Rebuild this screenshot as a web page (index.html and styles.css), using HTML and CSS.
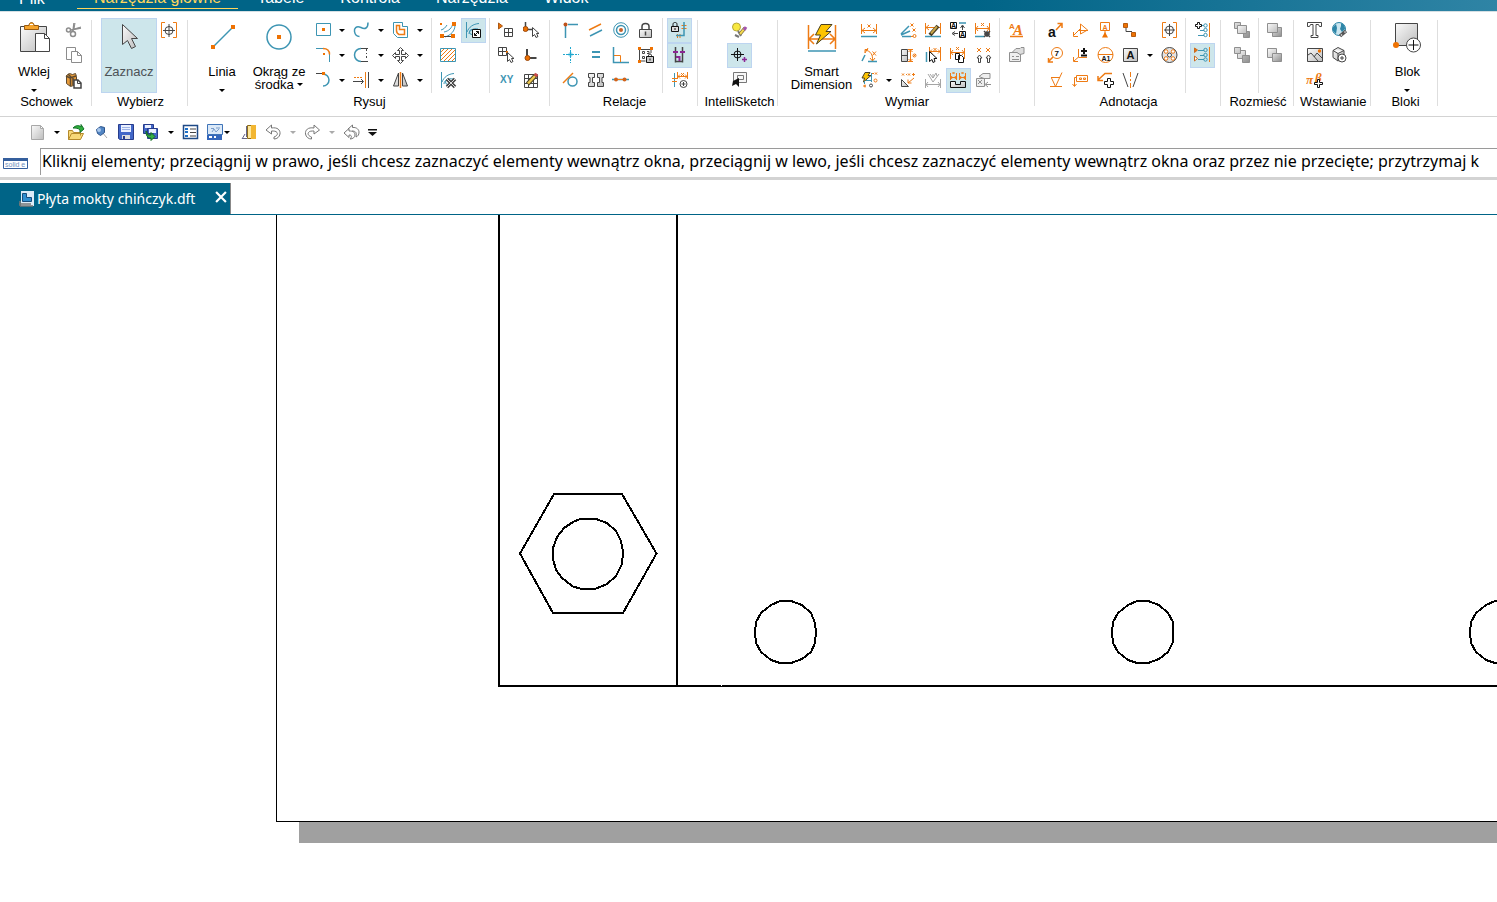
FILE: index.html
```html
<!DOCTYPE html>
<html lang="pl">
<head>
<meta charset="utf-8">
<title>Płyta mokty chińczyk.dft</title>
<link rel="stylesheet" href="styles.css">
</head>
<body>
<svg class="defs" width="0" height="0" aria-hidden="true">
  <defs>
    <linearGradient id="gg" x1="0" y1="0" x2="1" y2="1"><stop offset="0" stop-color="#fafafa"/><stop offset="1" stop-color="#bdbdbd"/></linearGradient>
    <linearGradient id="gd" x1="0" y1="0" x2="1" y2="1"><stop offset="0" stop-color="#e2e2e2"/><stop offset="1" stop-color="#8e8e8e"/></linearGradient>
    <symbol id="down" viewBox="0 0 6 3"><path d="M0 0h6l-3 3z" fill="currentColor"/></symbol>
  </defs>
</svg>

<nav class="menu">
  <a class="menu-file" href="#">Plik</a>
  <a class="menu-tab active" href="#">Narzędzia główne</a>
  <a class="menu-tab" href="#">Tabele</a>
  <a class="menu-tab" href="#">Kontrola</a>
  <a class="menu-tab" href="#">Narzędzia</a>
  <a class="menu-tab" href="#">Widok</a>
</nav>

<div class="ribbon">
  <section class="group">
    <div class="tools roomy">
      <button class="big gap-after">
        <svg class="i32" viewBox="0 0 32 32"><path class="k" fill="url(#gg)" d="M2.500 5.500h26v25h-26z"/><path fill="#f5a32b" stroke="#9a5b10" d="M6.500 8.500v-4h4.500c0-4 5-4 5 0h4.500v4z"/><path d="M12 3.500h3" stroke="#fff"/><path class="k" fill="#fff" d="M17.500 12.500h9l5 5v13h-14z"/><path class="k" d="M26.500 12.500v5h5"/></svg>
        <span>Wklej</span><svg class="down"><use href="#down"/></svg>
      </button>
      <div class="col">
        <button class="tool" aria-label="Wytnij"><svg class="i" viewBox="0 0 17 17"><g stroke="#8c8c8c"><path stroke-width="1.500" d="M9 1L8 9M16 6L6 8"/><circle cx="3.500" cy="8" r="2" stroke-width="1.500"/><circle cx="8" cy="12" r="2.500" stroke-width="1.500"/><path d="M10 1L9 7l7-2"/></g></svg></button>
        <button class="tool" aria-label="Kopiuj"><svg class="i" viewBox="0 0 17 17"><path fill="#fff" stroke="#8c8c8c" d="M1.500.5h9v12h-9z"/><path fill="#fff" stroke="#8c8c8c" d="M6.500 4.500h6l4 4v7h-10zM12.500 4.500v4h4"/></svg></button>
        <button class="tool" aria-label="Wklej specjalnie"><svg class="i" viewBox="0 0 17 17"><path fill="#e79b3a" stroke="#5e4a30" d="M1.500 3.500l3-2 3 1 3-1 1 3v8l-6 2-4-3z"/><path stroke="#5e4a30" stroke-width="1.500" d="M1 4l4 2 6-2M5.500 6v8M3 2l3 3M8 6v7"/><path class="k" fill="#fff" stroke-width="1.500" d="M9 8h4l3 3v5H9z"/><path class="k" d="M12.500 8v3.500H16"/></svg></button>
      </div>
    </div>
    <h2>Schowek</h2>
  </section>
  <section class="group">
    <div class="tools roomy">
      <button class="big select on">
        <svg class="i32" viewBox="0 0 32 32"><path class="k" fill="url(#gg)" d="M9.500 3.500v20l5-4 4 8 4-2-4-8h6z"/></svg>
        <span>Zaznacz</span>
      </button>
      <div class="col">
        <button class="tool" aria-label="Znacznik środka"><svg class="i" viewBox="0 0 17 17"><path class="o" d="M4 .5H.5v15H4M12 .5h3.500v15H12"/><circle class="k" cx="8" cy="8.500" r="4"/><path class="k" d="M8 2v13M2 8.500h12"/></svg></button>
      </div>
    </div>
    <h2>Wybierz</h2>
  </section>
  <section class="group">
    <div class="tools">
      <button class="big line">
        <svg class="i32" viewBox="0 0 32 32"><path class="b" stroke-width="1.500" d="M7 26L27 6"/><path class="of" d="M5 24h4v4H5zM25 4h4v4h-4z"/></svg>
        <span>Linia</span><svg class="down"><use href="#down"/></svg>
      </button>
      <button class="big circle">
        <svg class="i32" viewBox="0 0 32 32"><circle class="b" cx="16" cy="16" r="12" stroke-width="1.500"/><path class="of" d="M14 14h4v4h-4z"/></svg>
        <span>Okrąg ze<br>środka <svg class="down inline"><use href="#down"/></svg></span>
      </button>
      <div class="col">
        <button class="tool wide" aria-label="Prostokąt"><svg class="i" viewBox="0 0 17 17"><path class="b" d="M2.500 1.500h14v12h-14z"/><path class="of" d="M8 6h3v3H8z"/></svg><svg class="down"><use href="#down"/></svg></button>
        <button class="tool wide" aria-label="Zaokrąglenie"><svg class="i" viewBox="0 0 17 17"><path class="b" d="M2 1.500h7M15.500 7v8"/><path class="o" stroke-width="1.500" d="M9 1.500c4 0 6.500 2 6.500 6"/><path class="of" d="M9 6h2v2H9z"/></svg><svg class="down"><use href="#down"/></svg></button>
        <button class="tool wide" aria-label="Łuk"><svg class="i" viewBox="0 0 17 17"><path class="k" d="M2 1.500h6"/><path class="b" stroke-width="1.500" d="M9 2a6 6 0 0 1 0 12"/><path class="of" d="M8 0h3v3H8z"/></svg><svg class="down"><use href="#down"/></svg></button>
      </div>
      <div class="col">
        <button class="tool wide" aria-label="Krzywa"><svg class="i" viewBox="0 0 17 17"><path class="b" stroke-width="1.500" d="M15 .5c0 6-3 7-7 5-5-2-7 1-6.500 4 .5 3 2 5 5 5"/></svg><svg class="down"><use href="#down"/></svg></button>
        <button class="tool wide" aria-label="Przytnij"><svg class="i" viewBox="0 0 17 17"><path class="b" stroke-width="1.500" d="M8 1.500a6.500 6.500 0 0 0 0 13"/><path class="k" d="M8 1.500h7M8 14.500h7M13.500 2v2M13.500 6v1M13.500 9v2"/></svg><svg class="down"><use href="#down"/></svg></button>
        <button class="tool wide" aria-label="Wydłuż"><svg class="i" viewBox="0 0 17 17"><path class="o" stroke-dasharray="2 1" d="M1 5.500h9"/><path class="o" d="M12.500 0v16"/><path class="k" d="M0 9.500h10M8 7l2.500 2.500L8 12M15.500 0v16"/></svg><svg class="down"><use href="#down"/></svg></button>
      </div>
      <div class="col">
        <button class="tool wide" aria-label="Odsunięcie"><svg class="i" viewBox="0 0 17 17"><path class="b" d="M1.500.5h9v4h5v11h-10l-4-4z"/><path class="o" stroke-width="1.500" d="M4.500 3.500h3v4h5v5H7c-2-1-2.500-2-2.500-4z"/></svg><svg class="down"><use href="#down"/></svg></button>
        <button class="tool wide" aria-label="Przesuń"><svg class="i" viewBox="0 0 17 17"><path class="k" fill="#fff" d="M8.500.5l3 3h-2v4h4v-2l3 3-3 3v-2h-4v4h2l-3 3-3-3h2v-4h-4v2l-3-3 3-3v2h4v-4h-2z"/></svg><svg class="down"><use href="#down"/></svg></button>
        <button class="tool wide" aria-label="Odbicie lustrzane"><svg class="i" viewBox="0 0 17 17"><path class="k" fill="url(#gg)" d="M6.500 1v13h-5zM10.500 1v13h5z"/><path class="o" stroke-width="1.500" d="M8.500 0v16"/></svg><svg class="down"><use href="#down"/></svg></button>
      </div>
      <div class="sep"></div>
      <div class="col">
        <button class="tool" aria-label="Wypełnienie konturu"><svg class="i" viewBox="0 0 17 17"><path class="b" d="M4 10c5-1 8-4 9-9M5 15c6-2 10-6 10-12M1 8c3-1 4-2 6-5"/><path class="of" d="M12 0h4v4h-4zM0 12h4v4H0zM11 12h4v4h-4zM0 1h2v2H0z"/><path class="k" d="M4 14.500h7"/></svg></button>
        <button class="tool" aria-label="Wypełnienie"><svg class="i" viewBox="0 0 17 17"><path class="o" d="M1 5l4-4M1 9l8-8M1 13l12-12M4 14L16 2M8 14l8-8M12 14l4-4"/><path class="b" d="M.5 1.500h15v13H.5z"/></svg></button>
        <button class="tool" aria-label="Usuń konstrukcję"><svg class="i" viewBox="0 0 17 17"><path class="b" d="M1.500 0v16M2 10C4 5 8 2 14 1.500M4 12c0-4 5-6 9-5"/><circle class="b" cx="8" cy="10" r="2.500"/><path class="k" stroke-width="3.500" d="M7 7l8 8M15 7l-8 8"/><path stroke="#ddd" stroke-width="1" d="M7 7l8 8M15 7l-8 8"/></svg></button>
      </div>
      <div class="col">
        <button class="tool on" aria-label="Konstrukcja"><svg class="i" viewBox="0 0 17 17"><path class="b" d="M1.500 0v16M2 10C4 5 8 2 14 1.500M4 12c0-4 5-6 9-5"/><circle class="b" cx="7" cy="10" r="2.500"/><path class="kb" fill="#fff" d="M7.500 7.500h8v8h-8z"/><path class="kb" d="M9.500 13.500l4-4M11 9.500h2.500V12M9.500 11v2.500H12"/></svg></button>
      </div>
      <div class="sep tight"></div>
      <div class="col">
        <button class="tool" aria-label="Siatka"><svg class="i" viewBox="0 0 17 17"><path fill="#ee7203" stroke="#a85a18" d="M.5 1l4 3-4 3z"/><path class="k" d="M6.500 6.500h8v8h-8zM10.500 6v9M6 10.500h9"/></svg></button>
        <button class="tool" aria-label="Przyciągaj do siatki"><svg class="i" viewBox="0 0 17 17"><path class="k" d="M.5.5h8v8h-8zM4.500 0v9M0 4.500h9"/><path class="of" d="M8 4h2v2H8z"/><path class="k" fill="#fff" d="M9.500 5.500v9l2-2 1.500 3 2-1-1.500-3H16z"/></svg></button>
        <button class="tool" aria-label="XY"><svg class="i" viewBox="0 0 17 17"><text class="tb" x="2" y="11" font-size="10">XY</text></svg></button>
      </div>
      <div class="col">
        <button class="tool" aria-label="Przesuń początek"><svg class="i" viewBox="0 0 17 17"><path class="k" stroke-width="1.500" d="M2.500 0v7M3 7.500h7"/><circle cx="2.500" cy="7" r="2.500" fill="#ee7203" stroke="#9a4a10"/><path class="k" fill="#fff" d="M9.500 5.500v9l2-2 1.500 3 2-1-1.500-3H16z"/></svg></button>
        <button class="tool" aria-label="Zeruj początek"><svg class="i" viewBox="0 0 17 17"><path class="k" stroke-width="2" d="M4 2v9h9.500"/><circle cx="4.500" cy="11" r="2.500" fill="#ee7203" stroke="#9a4a10"/></svg></button>
        <button class="tool" aria-label="Opcje siatki"><svg class="i" viewBox="0 0 17 17"><path class="k" d="M1.500 2.500h13v13h-13zM5.500 2v14M10.500 2v14M1 6.500h14M1 11.500h14"/><path stroke="#4d4528" stroke-width="4.500" d="M4.500 12L13 3"/><path stroke="#eec84e" stroke-width="2.500" d="M5 11.500L12 4"/><path stroke="#c94a4a" stroke-width="3.500" d="M12 4l2-2"/></svg></button>
      </div>
    </div>
    <h2>Rysuj</h2>
  </section>
  <section class="group">
    <div class="tools">
      <div class="col">
        <button class="tool" aria-label="Połącz"><svg class="i" viewBox="0 0 17 17"><path class="b" stroke-width="1.500" d="M3.500 4v12M6 2.500h10"/><circle cx="3.500" cy="2.500" r="2" fill="#c0521a"/></svg></button>
        <button class="tool" aria-label="Poziomo/pionowo"><svg class="i" viewBox="0 0 17 17"><path stroke="#21a8cf" stroke-dasharray="2 1" d="M1 7.500h16M8.500 0v16"/><path stroke="#21a8cf" stroke-width="1.500" d="M6 7.500h5M8.500 5v5"/></svg></button>
        <button class="tool" aria-label="Styczny"><svg class="i" viewBox="0 0 17 17"><circle class="b" cx="10.500" cy="9.500" r="4.500" stroke-width="1.500"/><path class="o" stroke-width="1.500" d="M1 11L11 1"/></svg></button>
      </div>
      <div class="col">
        <button class="tool" aria-label="Równoległy"><svg class="i" viewBox="0 0 17 17"><path class="o" stroke-width="1.500" d="M2 8l12-6"/><path class="b" stroke-width="1.500" d="M3 14l12-6"/></svg></button>
        <button class="tool" aria-label="Równy"><svg class="i" viewBox="0 0 17 17"><path class="b" stroke-width="2" d="M5 5h8M5 10h8"/></svg></button>
        <button class="tool" aria-label="Symetryczny"><svg class="i" viewBox="0 0 17 17"><path class="k" fill="url(#gg)" d="M1.500 1.500h6v4h-2v5h2v4h-6v-4h1.500v-5H1.500zM16.500 1.500h-6v4h2v5h-2v4h6v-4H15v-5h1.500z"/></svg></button>
      </div>
      <div class="col">
        <button class="tool" aria-label="Koncentryczny"><svg class="i" viewBox="0 0 17 17"><circle class="b" cx="9" cy="8" r="7.300"/><circle class="b" cx="9" cy="8" r="4.500" stroke-width="1.500"/><circle cx="9" cy="8" r="2" fill="#c8612a"/></svg></button>
        <button class="tool" aria-label="Prostopadły"><svg class="i" viewBox="0 0 17 17"><path class="b" stroke-width="1.500" d="M1.500 0v15.500H17"/><path class="o" d="M2 8.500h6.500V15"/></svg></button>
        <button class="tool" aria-label="Współliniowy"><svg class="i" viewBox="0 0 17 17"><path class="b" stroke-width="1.500" d="M0 7.500h17"/><path class="o" d="M4 7.500h9"/><circle cx="4" cy="7.500" r="2" fill="#d3621a"/><circle cx="12.500" cy="7.500" r="2" fill="#d3621a"/></svg></button>
      </div>
      <div class="col">
        <button class="tool" aria-label="Zablokuj"><svg class="i" viewBox="0 0 17 17"><path class="k" stroke-width="1.500" d="M5 8V4.500c0-4 7-4 7 0V8"/><path class="k" fill="url(#gg)" d="M2.500 7.500h12v8h-12z"/><path class="k" stroke-width="1.500" d="M8.500 9.500v4"/></svg></button>
        <button class="tool" aria-label="Zestaw sztywny"><svg class="i" viewBox="0 0 17 17"><path class="k" d="M2.500 2v12h6M3 2.500h11V6M5.500 4.500h2v2h-2zM10 4.500h2v2h-2M5.500 9.500h2v2h-2z"/><path class="of" d="M1 0h3v3H1zM13 0h3v3h-3zM1 13h3v3H1z"/><path class="kb" d="M11.500 10V8.500c0-2 3-2 3 0V10"/><path class="kb" fill="#ccc" d="M9.500 9.500h7v6h-7zM13 11.500v2"/></svg></button>
      </div>
      <div class="sep"></div>
      <div class="col">
        <button class="tool on" aria-label="Utrzymaj relacje"><svg class="i" viewBox="0 0 17 17"><path class="kb" d="M2 5V2.500c0-3 4-3 4 0V5"/><path class="kb" fill="#ddd" d="M.5 4.500h7v5h-7zM4 6v2"/><path class="o" d="M10.500 3.500h5M10.500 6.500h5M6.500 12v4M9 12v4"/><path class="b" stroke-width="1.500" d="M13 0v13.500H5"/></svg></button>
        <button class="tool on" aria-label="Uchwyty relacji"><svg class="i" viewBox="0 0 17 17"><path class="k" stroke-width="1.500" d="M4.500 0v15.500M11.500 0v15.500M4.500 14.500h7"/><path stroke="#8b2794" stroke-width="2" d="M2 5h5M9 5h5M5 10h3.500V14"/></svg></button>
        <button class="tool" aria-label="Asystent relacji"><svg class="i" viewBox="0 0 17 17"><path class="b" d="M3.500 1v14"/><path class="o" d="M1 6.500h5M1 9.500h5M6.500 0v7M16.500 0v7M7 4.500h9M9 2.500l-2 2 2 2M14 2.500l2 2-2 2M10 1l3 3m0-3l-3 3"/><circle class="k" cx="12.500" cy="12" r="3.500" fill="#fff"/><path class="k" d="M12.500 10v4M10.500 12h4"/></svg></button>
      </div>
    </div>
    <h2>Relacje</h2>
  </section>
  <section class="group">
    <div class="tools intelli">
      <div class="col">
        <button class="tool" aria-label="Opcje IntelliSketch"><svg class="i" viewBox="0 0 17 17"><circle cx="5.500" cy="5" r="4" fill="#f8e840" stroke="#b6a73a"/><path stroke="#777" stroke-width="2" d="M7 9l3 5M4 13l4 2"/><path stroke="#6b5b30" stroke-width="3.500" d="M9 12l5-6"/><path stroke="#f3d950" stroke-width="2" d="M9 12l5-6"/><path stroke="#a355b0" stroke-width="3" d="M13 8l2-3"/></svg></button>
        <button class="tool on" aria-label="Punkt przyciągania"><svg class="i" viewBox="0 0 17 17"><circle class="kb" cx="6.500" cy="7.500" r="3.500"/><path class="kb" d="M6.500 1v13M0 7.500h13"/><path stroke="#8b2794" stroke-width="1.500" d="M13.500 10v5M11 12.500h5"/></svg></button>
        <button class="tool" aria-label="Strefa"><svg class="i" viewBox="0 0 17 17"><path stroke="#777" fill="#f7f7f7" d="M2.500.5h13v10h-13z"/><path stroke="#777" d="M6.500 3.500h6v4h-6z"/><path d="M8 6v9l-3-3-4 2 1-5z" fill="#111"/></svg></button>
      </div>
    </div>
    <h2 class="snug">IntelliSketch</h2>
  </section>
  <section class="group">
    <div class="tools">
      <button class="big smart">
        <svg class="i32" viewBox="0 0 32 32"><path class="o" stroke-width="1.500" d="M2.500 4v24M29.500 4v24M3 18h26M8 13l-5 5 5 5M24 13l5 5-5 5"/><path class="b" stroke-width="1.500" d="M2 30h28"/><path fill="#fdc400" stroke="#4b4020" d="M15 3.500h11l-6 7h5L10.500 23l4-9h-5z"/></svg>
        <span>Smart<br>Dimension</span>
      </button>
      <div class="col">
        <button class="tool" aria-label="Odległość między"><svg class="i" viewBox="0 0 17 17"><path class="o" d="M.5 2v10M15.500 2v10M1 8.500h14M4 6L1 8.500 4 11M12 6l3 2.500-3 2.500M6.500 2.500l3 3m0-3l-3 3"/><path class="b" stroke-width="1.500" d="M0 14.500h16"/></svg></button>
        <button class="tool" aria-label="Kąt między"><svg class="i" viewBox="0 0 17 17"><path class="o" d="M4 6l3-5M4 3c6 1 8 5 7.500 11M4 6V2.500h3M9 11l2.500 3L14 11M11.500 4.500l3.500 4m0-4l-3.500 4"/><path class="b" stroke-width="1.500" d="M1 14l3-6M7 14.500h9"/></svg></button>
        <button class="tool wide" aria-label="Wymiar z bazy"><svg class="i" viewBox="0 0 17 17"><path fill="#fdc400" stroke="#4b4020" d="M4 .5h5L7 3.500h3L2.500 10l1-4H1z"/><path class="o" d="M11 1.500h2M14 .5l2 2m0-2l-2 2M4 12.500v3M2.500 13l2 2m0-2l-2 2"/><path class="b" d="M10.500 1v9M5 8.500h6M3.500 9v3"/><circle class="o" cx="14.500" cy="8.500" r="1.500"/><circle class="k" cx="10" cy="13.500" r="1.500"/></svg><svg class="down"><use href="#down"/></svg></button>
      </div>
      <div class="col">
        <button class="tool" aria-label="Wymiar kątowy współrzędnych"><svg class="i" viewBox="0 0 17 17"><path class="b" stroke-width="1.500" d="M1 12l8-8M1 13l9-4M2 14.500h9"/><path class="o" d="M10.500 1.500l3 3m0-3l-3 3M12.500 6.500l3 3m0-3l-3 3M11 14.500h2"/><circle class="o" cx="14.500" cy="14" r="1.500"/></svg></button>
        <button class="tool" aria-label="Średnica symetryczna"><svg class="i" viewBox="0 0 17 17"><path class="k" fill="url(#gg)" d="M1.500 2.500h6v12h-6zM1 8.500h7"/><path class="o" d="M8 2.500h5M8 14.500h5M10.500 3v11M8.500 5l2-2 2 2M8.500 12l2 2 2-2"/><circle class="o" cx="14.500" cy="8.500" r="1.500"/><path class="o" d="M13 10l3-3"/></svg></button>
        <button class="tool" aria-label="Wymiar fazowania"><svg class="i" viewBox="0 0 17 17"><path class="o" d="M2 1.500l2 2m0-2l-2 2M6 2.500h1M8 1.500l2 2m0-2l-2 2M12 2.500h3M13.500 1v3M14 6l-6 5M8 7.500V11h3.500"/><path class="k" fill="url(#gg)" d="M1.500 7.500l7 7h-7z"/></svg></button>
      </div>
      <div class="col">
        <button class="tool" aria-label="Edytuj wymiar"><svg class="i" viewBox="0 0 17 17"><path class="o" d="M.5 1v11M15.500 1v11M1 5.500h14M4 3L1 5.500 4 8"/><path class="b" stroke-width="1.500" d="M0 14.500h16"/><path stroke="#403820" stroke-width="4" d="M5 13l8-9"/><path stroke="#c8a64a" stroke-width="2" d="M6 11.500l6-7"/></svg></button>
        <button class="tool" aria-label="Zaznacz wymiar"><svg class="i" viewBox="0 0 17 17"><path class="b" stroke-width="1.500" d="M1.500 5v10"/><path class="o" d="M4.500 0v8M15.500 0v14M5 4.500h10M7 2.500l-2 2 2 2M13 2.500l2 2-2 2M8.500 1l3 3m0-3l-3 3"/><path class="kb" fill="#fff" d="M4.500 4.500v10l2.500-2 1 3 2-1-1-3h3z"/></svg></button>
        <button class="tool off" aria-label="Pomocniczy wymiar"><svg class="i" viewBox="0 0 17 17"><path stroke="#a5a5a5" d="M.5 7v9M15.500 7v9M1 12.500h14M3 10l-2 2.500L3 15M13 10l2 2.500-2 2.500M3 2l5 8M14 2L8 10M8 2v4M5 2l3 4 3-5 1 3"/></svg></button>
      </div>
      <div class="col">
        <button class="tool" aria-label="Wyrównaj tekst"><svg class="i" viewBox="0 0 17 17"><path class="b" stroke-width="1.500" d="M9 1h7"/><path class="kb" fill="#fff" d="M.5.5h6v6h-6zM9.500 9.500h6v6h-6z"/><text class="tk" x="1" y="6" font-size="7">A</text><text class="tk" x="10" y="15" font-size="7">A</text><path class="k" d="M8 11.500H3.500M5 9.500l-3 2 3 2M12.500 8V4M10.500 6l2-3 2 3"/></svg></button>
        <button class="tool" aria-label="Kopiuj wymiar"><svg class="i" viewBox="0 0 17 17"><path class="o" d="M.5 1v11M14.500 1v11M1 5.500h13M3 3L1 5.500 3 8M12 3l2 2.500L12 8M6 0l3 3m0-3L6 3"/><path class="kb" fill="#fff" d="M5.500 6.500h4v6h-4zM8.500 8.500h3l2 2v5h-5z"/></svg></button>
        <button class="tool on" aria-label="Układ wymiarów"><svg class="i" viewBox="0 0 17 17"><path class="o" d="M.5 1v7M6.500 1v7M1 5.500h5M2 4L1 5.500 2 7M5 4l1 1.500L5 7M9.500 1v7M15.500 1v7M10 5.500h5M11 4l-1 1.500L11 7M14 4l1 1.500L14 7M2.500 0l2 2m0-2l-2 2M11.500 0l2 2m0-2l-2 2"/><path class="kb" fill="url(#gg)" d="M.5 9.500h5v3h5v-3h5v6H.5z"/></svg></button>
      </div>
      <div class="col">
        <button class="tool" aria-label="Usuń wymiar"><svg class="i" viewBox="0 0 17 17"><path class="o" d="M.5 1v11M14.500 1v10M1 6.500h13M3 4L1 6.500 3 9M12 4l2 2.500L12 9M6 1l3 3m0-3L6 4"/><path class="b" stroke-width="1.500" d="M0 14.500h9"/><path class="k" stroke-width="1.500" d="M9 9l6 6M15 9l-6 6M12 9v6M9 12h6"/></svg></button>
        <button class="tool" aria-label="Przesuń wymiary"><svg class="i" viewBox="0 0 17 17"><path class="o" d="M2 1l4 4m0-4L2 5M11 1l4 4m0-4l-4 4"/><path class="k" d="M3.500 15.500V11H2l2.500-3L7 11H5.500v4.500zM12.500 15.500V11H11l2.500-3 2.500 3h-1.500v4.500z"/></svg></button>
        <button class="tool off" aria-label="Pobierz wymiary"><svg class="i" viewBox="0 0 17 17"><path stroke="#8f8f8f" fill="#eee" d="M1.500 6.500h8v8h-8zM4 4.500l4-3h7v5H9z"/><path stroke="#8f8f8f" d="M3 8l4 4m0-4l-4 4M16 12.500h-5M13 10l-3 2.500 3 2.500"/></svg></button>
      </div>
      <div class="sep tight"></div>
      <div class="col">
        <button class="tool" aria-label="Style"><svg class="i" viewBox="0 0 17 17"><text class="to serif" x="5" y="13" font-size="15" font-style="italic">A</text><text class="to" x="1" y="7" font-size="8">A</text><path class="o" stroke-width="1.500" d="M2 14.500h13"/></svg></button>
        <button class="tool off" aria-label="Właściwości"><svg class="i" viewBox="0 0 17 17"><path stroke="#8f8f8f" fill="#eee" d="M1.500 5.500h11v9h-11z"/><path stroke="#8f8f8f" fill="#ddd" d="M4 5.500l4-4h4l1-1h3v6l-4 1-3-2z"/><path stroke="#8f8f8f" d="M4 9.500h2M8 9.500h3M4 12.500h7"/></svg></button>
      </div>
    </div>
    <h2>Wymiar</h2>
  </section>
  <section class="group">
    <div class="tools">
      <div class="col">
        <button class="tool" aria-label="Objaśnienie"><svg class="i" viewBox="0 0 17 17"><text class="tk" x="1" y="15" font-size="14">a</text><path class="o" stroke-width="1.500" d="M9 8l6-6.500M10.500 1.500H15V6"/></svg></button>
        <button class="tool" aria-label="Balon"><svg class="i" viewBox="0 0 17 17"><circle class="o" cx="10" cy="6" r="5.500"/><path class="o" stroke-width="1.500" d="M6 10l-5 5M1.500 11v4H6"/><text class="tk" x="7.500" y="9" font-size="8">7</text></svg></button>
        <button class="tool" aria-label="Chropowatość"><svg class="i" viewBox="0 0 17 17"><path class="o" d="M4 5.500h9M4.500 6l4 8.500L15 .5M3 14.500h12"/></svg></button>
      </div>
      <div class="col">
        <button class="tool" aria-label="Linia odniesienia"><svg class="i" viewBox="0 0 17 17"><path class="o" d="M1 14l8-8M1.500 10v4.500H6M7 8.500h9M8.500 2v10l7-4z"/></svg></button>
        <button class="tool" aria-label="Symbol krawędzi"><svg class="i" viewBox="0 0 17 17"><path class="o" d="M2 14l4-3.500M6.500 2v8.500H15M1.500 10v4.500H6"/><path class="kb" stroke-width="2" d="M9 4h6M12 1v6M9 8.500h6"/></svg></button>
        <button class="tool" aria-label="Ramka tolerancji"><svg class="i" viewBox="0 0 17 17"><path class="o" d="M4.500 3.500h11v6h-11zM4 5.500H2.500V14M.5 12l2 2.500 2-2.500M7.500 6h2v1.500h-2zM11.500 6h2v1.500h-2z"/></svg></button>
      </div>
      <div class="col">
        <button class="tool" aria-label="Baza odniesienia"><svg class="i" viewBox="0 0 17 17"><path class="o" d="M3.500.5h9v8h-9zM8 9v4"/><path class="of" d="M5 15.500h6L8 10z"/><text class="to" x="5.500" y="7.500" font-size="7">A</text></svg></button>
        <button class="tool" aria-label="Punkt bazowy"><svg class="i" viewBox="0 0 17 17"><circle class="o" cx="8.500" cy="8" r="7.500"/><path class="o" d="M1 7.500h15"/><text class="tk" x="4.500" y="14" font-size="7">A1</text></svg></button>
        <button class="tool" aria-label="Dodaj odnośnik"><svg class="i" viewBox="0 0 17 17"><path class="o" stroke-width="1.500" d="M15 1.500H8L1 8M1 4v4.500h5"/><path class="kb" fill="#fff" d="M10.500 6.500h3v3h3v3h-3v3h-3v-3h-3v-3h3z"/></svg></button>
      </div>
      <div class="col">
        <button class="tool" aria-label="Łącznik"><svg class="i" viewBox="0 0 17 17"><path class="k" d="M4 5v4.500h6"/><path fill="#ee7203" stroke="#b55a10" d="M1.500 1.500h4v4h-4zM9.500 10.500h4v4h-4z"/></svg></button>
        <button class="tool wide" aria-label="Tekst"><svg class="i" viewBox="0 0 17 17"><path class="k" fill="url(#gg)" d="M1.500 1.500h14v13h-14z"/><text class="tk" x="4.500" y="12" font-size="11">A</text></svg><svg class="down"><use href="#down"/></svg></button>
        <button class="tool" aria-label="Linia środkowa"><svg class="i" viewBox="0 0 17 17"><path class="k" d="M1 1l5 14M16 1l-5 14"/><path class="o" stroke-dasharray="5 2 2 2" d="M8.500 0v16"/></svg></button>
      </div>
      <div class="col">
        <button class="tool" aria-label="Oznaczenie środka"><svg class="i" viewBox="0 0 17 17"><path class="o" d="M5 .5H1.500v15H5M12 .5h3.500v15H12"/><circle class="k" cx="8.500" cy="8" r="4"/><path class="k" d="M8.500 2v12M3 8h11"/></svg></button>
        <button class="tool" aria-label="Okrąg śrub"><svg class="i" viewBox="0 0 17 17"><circle class="k" cx="8.500" cy="8" r="7.500" fill="#e4e4e4"/><g class="o" fill="#fff"><circle cx="5" cy="4.500" r="1.800"/><circle cx="12" cy="4.500" r="1.800"/><circle cx="5" cy="11.500" r="1.800"/><circle cx="12" cy="11.500" r="1.800"/></g><circle class="k" cx="8.500" cy="8" r="2" fill="#fff"/></svg></button>
      </div>
      <div class="sep tight"></div>
      <div class="col">
        <button class="tool" aria-label="Dodaj do listy"><svg class="i" viewBox="0 0 17 17"><path class="kb" fill="#fff" d="M3.500.5h2v2h2v2h-2v2h-2v-2h-2v-2h2z"/><path class="o" d="M15.500 1v14"/><path class="b" d="M8 3.500h2M6 8.500h4M4 13.500h6"/><g class="b"><circle cx="11.500" cy="3.500" r="1.700"/><circle cx="11.500" cy="8" r="1.700"/><circle cx="11.500" cy="13" r="1.700"/></g></svg></button>
        <button class="tool on" aria-label="Lista balonów"><svg class="i" viewBox="0 0 17 17"><path fill="#ee7203" stroke="#c96a20" d="M.5 1l3 2-3 2.500z"/><path fill="#fff" stroke="#c96a20" d="M.5 9l3 2.500-3 2.500z"/><path class="o" d="M15.500 0v15"/><path class="b" d="M4 3.500h6M6 8.500h4M4 12.500h6"/><g class="b"><circle cx="11.500" cy="3" r="1.700"/><circle cx="11.500" cy="8" r="1.700"/><circle cx="11.500" cy="12.500" r="1.700"/></g></svg></button>
      </div>
    </div>
    <h2>Adnotacja</h2>
  </section>
  <section class="group">
    <div class="tools">
      <div class="col">
        <button class="tool off" aria-label="Przesuń na wierzch"><svg class="i" viewBox="0 0 17 17"><g stroke="#8f8f8f"><path fill="url(#gd)" d="M1.500.5h6v6h-6zM10.500 9.500h6v6h-6z"/><path fill="url(#gg)" d="M4.500 3.500h9v8h-9z"/></g></svg></button>
        <button class="tool off" aria-label="Przesuń na spód"><svg class="i" viewBox="0 0 17 17"><g stroke="#8f8f8f"><path fill="url(#gg)" d="M4.500 3.500h8v8h-8z"/><path fill="url(#gd)" d="M1.500.5h6v6h-6zM9.500 8.500h7v7h-7z"/></g></svg></button>
      </div>
      <div class="sep"></div>
      <div class="col">
        <button class="tool off" aria-label="Do przodu"><svg class="i" viewBox="0 0 17 17"><g stroke="#8f8f8f"><path fill="url(#gd)" d="M5.500 5.500h9v9h-9z"/><path fill="url(#gg)" d="M.5 1.500h10v9H.5z"/></g></svg></button>
        <button class="tool off" aria-label="Do tyłu"><svg class="i" viewBox="0 0 17 17"><g stroke="#8f8f8f"><path fill="url(#gg)" d="M.5 1.500h9v9h-9z"/><path fill="url(#gd)" d="M5.500 6.500h9v8h-9z"/></g></svg></button>
      </div>
    </div>
    <h2>Rozmieść</h2>
  </section>
  <section class="group">
    <div class="tools">
      <div class="col">
        <button class="tool" aria-label="Profil tekstu"><svg class="i" viewBox="0 0 17 17"><path class="k" fill="#fff" d="M1.500.5h14v4h-2l-1-2H10v11h2v2H5v-2h2v-11H4.500l-1 2h-2z"/></svg></button>
        <button class="tool" aria-label="Obraz"><svg class="i" viewBox="0 0 17 17"><path class="k" fill="url(#gg)" d="M1.500 1.500h15v13h-15z"/><path class="k" d="M2 8l3-2 7 8M8 10l3-4 5 5"/><circle cx="13.500" cy="4" r="1.700" fill="#ee7203"/></svg></button>
        <button class="tool" aria-label="Symbol"><svg class="i" viewBox="0 0 17 17"><text class="to serif" x="0" y="12" font-size="13" font-style="italic">π</text><text class="to serif" x="9" y="10" font-size="13" font-style="italic">β</text><path class="kb" fill="#fff" d="M11.500 7.500h2v3h3v2h-3v3h-2v-3h-3v-2h3z"/></svg></button>
      </div>
      <div class="col">
        <button class="tool" aria-label="Hiperłącze"><svg class="i" viewBox="0 0 17 17"><circle cx="8" cy="7" r="6.500" fill="#cbe6f0" stroke="#2e86a8"/><path fill="#2e86a8" d="M10 1c3 1 4 3 4 6l-3 3-2-3 1-3zM2 5l3-3 1 4-1 6-3-3z"/><path stroke="#555" stroke-width="3.500" d="M9 14l6-5"/><path stroke="#ddd" stroke-width="1.500" d="M10 13.500l1-1M13.500 10.500l1-1"/></svg></button>
        <button class="tool" aria-label="Obiekt"><svg class="i" viewBox="0 0 17 17"><path class="k" fill="url(#gg)" d="M7 .5l6 3v7l-6 3.500-5-3.500v-7zM2 3.500l5 3 6-3M7 6.500V14"/><circle class="k" cx="11" cy="11" r="4" fill="#fff"/><path class="k" d="M11 9v4M9 11h4"/></svg></button>
      </div>
    </div>
    <h2>Wstawianie</h2>
  </section>
  <section class="group">
    <div class="tools blocks">
      <button class="big">
        <svg class="i32" viewBox="0 0 32 32"><path class="k" fill="url(#gg)" d="M4.500 2.500h22v22h-22z"/><circle cx="5" cy="24" r="3" fill="#ee7203"/><circle class="k" cx="22.500" cy="24" r="7" fill="#fff"/><path class="kb" d="M22.500 19v10M17.500 24h10"/></svg>
        <span>Blok</span><svg class="down"><use href="#down"/></svg>
      </button>
    </div>
    <h2>Bloki</h2>
  </section>
</div>

<div class="quick">
  <button class="qb split" aria-label="Nowy"><svg class="i" viewBox="0 0 17 17"><path fill="url(#gg)" stroke="#a8a8a8" d="M2.500 1.500h9l3 3v11h-12zM11.500 1.500v3h3"/></svg><svg class="down"><use href="#down"/></svg></button>
  <button class="qb" aria-label="Otwórz"><svg class="i" viewBox="0 0 17 17"><path fill="#f7d877" stroke="#b58a2b" d="M.5 15.500v-9h4l1 2h7v3M.5 15.500l3-6h12l-3 6z"/><path fill="#2fae3b" stroke="#14702a" d="M5 4c3-3 6-3 8-1V.5l3 4.500L12 8.500V6C10 4 8 4 5 4z"/></svg></button>
  <button class="qb" aria-label="Przypnij"><svg class="i" viewBox="0 0 17 17"><path stroke="#aaa" d="M9 8l5 6"/><path fill="#5286c4" stroke="#2d548c" d="M3.500 5.500l4-3 4 1v5l-4 3-3-2z"/><circle cx="6" cy="6" r="2" fill="#a9c7ea"/></svg></button>
  <button class="qb" aria-label="Zapisz"><svg class="i" viewBox="0 0 17 17"><path fill="#4267c8" stroke="#273c8c" d="M.5.5h15v15H2l-1.500-1z"/><path fill="#eaf0ff" d="M3 1h10v7H3z"/><path stroke="#9db2e6" d="M4 3.500h8M4 5.500h8"/><path fill="#ddd" d="M4 11h8v4H4z"/><path fill="#273c8c" d="M5 12h2v3H5z"/></svg></button>
  <button class="qb split" aria-label="Zapisz jako"><svg class="i" viewBox="0 0 17 17"><path fill="#4267c8" stroke="#273c8c" d="M.5.5h10v9H.5zM4.500 4.500h10v10h-10z"/><path fill="#eaf0ff" d="M2 1h6v3H2zM6 5h7v4H6z"/><path fill="#35b044" stroke="#146b25" d="M3 7l2 4h3V8.500l4 4-4 4V14C4 14 3 11 3 7z"/></svg><svg class="down"><use href="#down"/></svg></button>
  <button class="qb" aria-label="Właściwości"><svg class="i" viewBox="0 0 17 17"><path fill="#fff" stroke="#1e4a86" stroke-width="1.500" d="M1.500 1.500h14v13h-14z"/><path fill="#1e70c8" d="M3 4h3v2H3zM3 7h3v2H3zM3 11h3v2H3z"/><path class="k" d="M8 5h6M8 8.500h6M8 12h6"/></svg></button>
  <button class="qb split near" aria-label="Widok"><svg class="i" viewBox="0 0 17 17"><path fill="#dbe9f8" stroke="#3f74b8" d="M.5.5h15v10H.5z"/><path stroke="#7a9cc9" d="M4 4.500h3M9 4h4M5 8l2-3 2 3 3-3"/><path fill="#3366bb" d="M0 11h15v5H0z"/><path fill="#fff" d="M2 12h3v2H2zM7 12h2v2H7z"/></svg><svg class="down"><use href="#down"/></svg></button>
  <button class="qb door" aria-label="Zamknij"><svg class="i" viewBox="0 0 17 17"><path stroke="#8c6b1b" fill="#ffe79a" d="M7.500 1.500h8v13h-8z"/><path fill="#f2b632" d="M11 1h5v14h-5z"/><path stroke="#668" d="M6.500 2v11M2 14.500h5M5 10l-3 5"/></svg></button>
  <button class="qb split off" aria-label="Cofnij"><svg class="i" viewBox="0 0 17 17"><path stroke="#777" fill="#fff" d="M1 6l5.500-5v3c6-1 9 2 8.500 6-.5 3-3 5-6 5v-2c3-1 4-3 3-4.500-1-1.500-3-1.500-5.500-1.500v3z"/></svg><svg class="down"><use href="#down"/></svg></button>
  <button class="qb split off" aria-label="Ponów"><svg class="i" viewBox="0 0 17 17"><path stroke="#777" fill="#fff" d="M15.500 6L10 1v3C4 3 1 6 1.500 10c.5 3 3 5 6 5v-2c-3-1-4-3-3-4.500 1-1.500 3-1.500 5.500-1.500v3z"/></svg><svg class="down"><use href="#down"/></svg></button>
  <button class="qb" aria-label="Powtórz"><svg class="i" viewBox="0 0 17 17"><path stroke="#777" fill="#fff" d="M1 9l5-4.500V7c4 0 6 1 6 4 0 2-2 4-5 4 2-2 2-4-1-4v2.500zM5 5l4.500-4v2.500C14 3 16 6 16 8c0 3-1 4-3 5 1-4 0-6-4-6"/></svg></button>
  <button class="more" aria-label="Dostosuj"><svg viewBox="0 0 9 7"><path d="M0 0h9v1.500H0zM0 3h9L4.500 7z" fill="#111"/></svg></button>
</div>

<div class="prompt">
  <label for="prompt" aria-label="Pasek podpowiedzi"><svg class="logo" viewBox="0 0 26 12"><path fill="#fff" stroke="#355f9d" d="M.5.5h24v10H.5z"/><path fill="#355f9d" d="M0 0h25v3H0z"/><text class="logo-text" x="2" y="9">solid e</text></svg></label>
  <input id="prompt" readonly value="Kliknij elementy; przeciągnij w prawo, jeśli chcesz zaznaczyć elementy wewnątrz okna, przeciągnij w lewo, jeśli chcesz zaznaczyć elementy wewnątrz okna oraz przez nie przecięte; przytrzymaj k">
</div>

<div class="documents">
  <div class="doc-tab">
    <svg class="doc-icon" viewBox="0 0 16 16"><path fill="#dcecf8" d="M2 0h13v15H2z"/><path fill="#2f8fd0" stroke="#174e7e" d="M3.500 2.500h4v4h5v4h-9z"/><path stroke="#777" stroke-width="1.500" d="M0 13h12M1 15h13M1 10v5"/></svg>
    <a href="#">Płyta mokty chińczyk.dft</a>
    <button class="close" aria-label="Zamknij kartę"><svg viewBox="0 0 11 11"><path d="M1 1l9 9M10 1l-9 9" stroke="#fff" stroke-width="2"/></svg></button>
  </div>
</div>

<main class="canvas">
  <svg class="drawing" role="img" aria-label="Rysunek płyty">
    <g transform="translate(0 -215)" shape-rendering="crispEdges">
      <rect class="shade" x="299" y="822" width="100%" height="21"/>
      <path class="edge" d="M276.500 215V822"/>
      <rect class="solid" x="276" y="821" width="100%" height="1"/>
      <path class="thick" d="M499 215V687M677 215V686"/>
      <rect class="solid" x="498" y="685" width="100%" height="2"/>
      <rect class="nick" x="721" y="685" width="1" height="1"/>
      <path class="thick" d="M520 553.500L554 494H622L656.500 553.500L623 613H553Z"/>
      <path class="thick" d="M573 522L580 519H596L607 523L616 531L621 541L623 552L622 564L616 576L607 584L596 588.500H580L573 586.500L562 578L556 570L553 559V548L557 537L564 528Z"/>
      <path class="thick" d="M755 632L756 622L761 613L771 605L780 601H791L802 605L811 613L815 623L816 632L815 643L811 652L802 659L791 663H780L771 660L761 652L756 643Z"/>
      <path class="thick" d="M1112 632L1113 622L1118 613L1128 605L1137 601H1148L1159 605L1168 613L1173 622V642L1168 652L1159 659L1148 663H1137L1128 660L1118 652L1113 643Z"/>
      <path class="thick" d="M1470 632L1471 622L1476 613L1486 605L1495 601H1506L1517 605L1526 613L1530 623L1531 632L1530 643L1526 652L1517 659L1506 663H1495L1486 660L1476 652L1471 643Z"/>
    </g>
  </svg>
</main>
</body>
</html>
```
FILE: styles.css
```css
* { box-sizing: border-box; }

body {
  margin: 0;
  min-height: 100vh;
  display: flex;
  flex-direction: column;
  overflow-x: hidden;
  background: #fff;
  color: #000;
  font-family: "Liberation Sans", Arial, sans-serif;
  font-size: 13px;
}

button {
  margin: 0;
  padding: 0;
  border: 1px solid transparent;
  background: none;
  color: inherit;
  font: inherit;
}

a { color: inherit; text-decoration: none; }

svg { display: block; fill: none; }

.defs { position: absolute; }

/* menu strip */
.menu {
  height: 12px;
  display: flex;
  align-items: flex-end;
  gap: 2px;
  padding-left: 19px;
  overflow: hidden;
  border-bottom: 1px solid #d5dfe3;
  background: linear-gradient(90deg, #006487 0, #006487 65%, #2f84a5 100%);
  color: #fff;
  font-size: 16px;
  line-height: 18px;
}
.menu-file { width: 56px; padding-bottom: 3px; }
.menu-tab { padding: 0 17px 2px; margin-bottom: 2px; border-bottom: 1px solid transparent; line-height: 16px; }
.menu-tab.active { color: #ffd65c; border-color: #ffd65c; }

/* ribbon */
.ribbon {
  display: flex;
  align-items: flex-start;
  padding: 6px 0;
  border-bottom: 1px solid #d3d3d3;
}
.group { flex: none; display: flex; flex-direction: column; position: relative; padding-right: 1px; }
.group::after {
  content: "";
  position: absolute;
  top: 2px;
  right: 0;
  width: 1px;
  height: 86px;
  background: #dedede;
}
.group h2 {
  margin: 0;
  height: 17px;
  padding: 1px 4px 0 6px;
  line-height: 16px;
  font-size: 13px;
  font-weight: normal;
  text-align: center;
}
.group h2.snug { padding: 1px 0 0 4px; }
.tools { display: flex; height: 75px; padding: 0 5px 0 8px; }
.tools.roomy { padding-left: 9px; }
.tools.intelli { padding: 0 25px 0 29px; }
.tools.blocks { padding-left: 11px; }
.col { display: flex; flex-direction: column; align-items: flex-start; }
.sep { width: 1px; margin: 0 4px; background: #dedede; }
.sep.tight { margin-left: 3px; }

.tool {
  width: 25px;
  height: 25px;
  display: flex;
  align-items: center;
  padding-left: 3px;
}
.tool.wide { width: 39px; }
.tool.wide .down { margin-left: 8px; }
.on { background: #cde6eb; border-color: #bdd5f0; }

.big {
  width: 50px;
  display: flex;
  flex-direction: column;
  align-items: center;
  padding-top: 2px;
  line-height: 13px;
  white-space: nowrap;
}
.big span { margin: 12px 0 11px; }
.big.gap-after { margin-right: 2px; }
.big.select { width: 56px; color: #4c5256; }
.big.line { width: 52px; }
.big.circle { width: 62px; }
.big.smart { width: 71px; }

.i { flex: none; width: 17px; height: 17px; }
.i32 { flex: none; width: 32px; height: 32px; }
.down { flex: none; width: 6px; height: 3px; color: #000; }
.down.inline { display: inline-block; vertical-align: 3px; }

/* icon strokes and fills */
.o { stroke: #ee7b14; }
.b { stroke: #3d95b3; }
.k { stroke: #454545; }
.kb { stroke: #111; }
.of { fill: #ee7203; }
.tk { fill: #111; font-weight: bold; }
.tb { fill: #3d95b3; font-weight: bold; }
.to { fill: #ee7b14; font-weight: bold; }
.serif { font-family: "Liberation Serif", "Times New Roman", serif; }

/* quick access */
.quick { display: flex; align-items: center; height: 31px; padding-left: 29px; gap: 8px; }
.qb { display: flex; align-items: center; border: 0; }
.qb.split { gap: 8px; }
.qb.near { gap: 0; }
.qb.door { margin-left: 2px; }
.qb.off .down { color: #aaa; }
.more { border: 0; }
.more svg { width: 9px; height: 7px; }

/* prompt bar */
.prompt { display: flex; height: 32px; padding-bottom: 2px; border-bottom: 3px solid #d3d3d3; }
.prompt label { flex: none; width: 40px; padding: 10px 0 0 3px; }
.logo { width: 26px; height: 12px; }
.logo-text { fill: #6f8fbe; font-size: 7px; }
.prompt input {
  flex: 1;
  min-width: 0;
  height: 27px;
  padding: 0 0 2px 1px;
  border: 0;
  border-top: 1px solid #9a9a9a;
  border-left: 1px solid #9a9a9a;
  outline: 0;
  background: #fff;
  font-family: "Noto Sans", "Open Sans", sans-serif;
  font-size: 16px;
}

/* document tabs */
.documents { display: flex; height: 35px; padding-top: 3px; border-bottom: 1px solid #006487; }
.doc-tab {
  display: flex;
  align-items: center;
  padding: 0 3px 0 19px;
  background: #006487;
  border-right: 1px solid #888;
  color: #fff;
  font-family: "Noto Sans", "Open Sans", sans-serif;
  font-size: 14px;
}
.doc-icon { width: 16px; height: 16px; margin-right: 2px; }
.close { margin-left: 20px; padding-bottom: 3px; border: 0; }
.close svg { width: 12px; height: 12px; }

/* drawing sheet */
.canvas { flex: 1; overflow: hidden; }
.drawing { width: 100%; height: 628px; }
.edge { stroke: #000; }
.thick { stroke: #000; stroke-width: 2; }
.solid { fill: #000; }
.shade { fill: #a0a0a0; }
.nick { fill: #fff; }
```
